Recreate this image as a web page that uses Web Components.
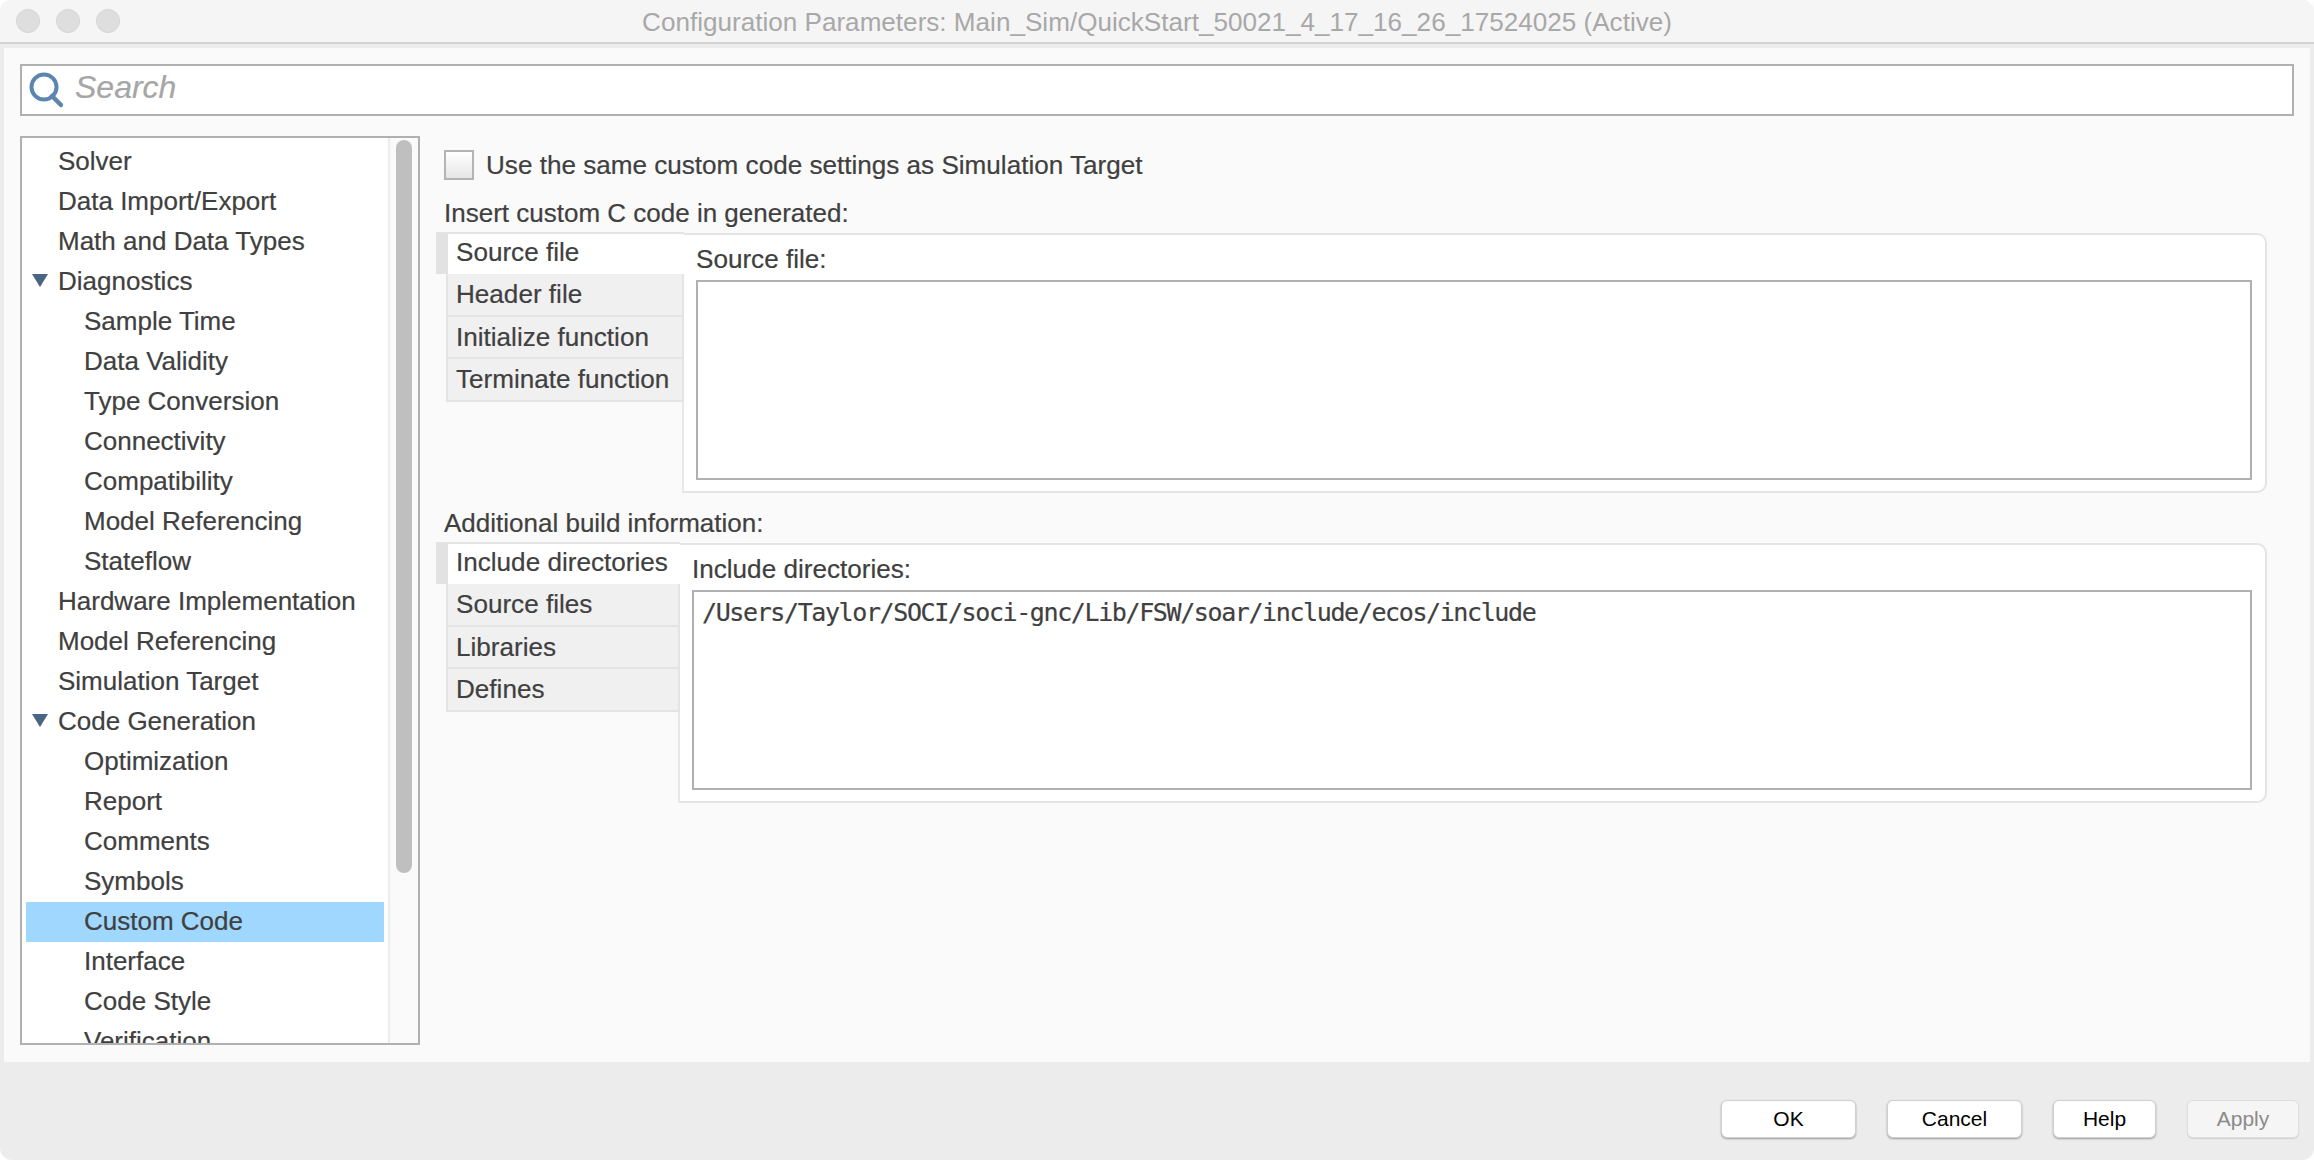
<!DOCTYPE html>
<html>
<head>
<meta charset="utf-8">
<title>Configuration Parameters</title>
<style>
  html, body { margin: 0; padding: 0; background: #fff; }
  body {
    font-family: "Liberation Sans", Arial, sans-serif;
    color: #404040;
    -webkit-text-stroke: 0.2px;
  }
</style>
</head>
<body>
<config-window>
  <title-bar slot="title">Configuration Parameters: Main_Sim/QuickStart_50021_4_17_16_26_17524025 (Active)</title-bar>
  <search-box slot="search"></search-box>
  <tree-view slot="tree">
    <tree-item>Solver</tree-item>
    <tree-item>Data Import/Export</tree-item>
    <tree-item>Math and Data Types</tree-item>
    <tree-item open>Diagnostics</tree-item>
    <tree-item level="1">Sample Time</tree-item>
    <tree-item level="1">Data Validity</tree-item>
    <tree-item level="1">Type Conversion</tree-item>
    <tree-item level="1">Connectivity</tree-item>
    <tree-item level="1">Compatibility</tree-item>
    <tree-item level="1">Model Referencing</tree-item>
    <tree-item level="1">Stateflow</tree-item>
    <tree-item>Hardware Implementation</tree-item>
    <tree-item>Model Referencing</tree-item>
    <tree-item>Simulation Target</tree-item>
    <tree-item open>Code Generation</tree-item>
    <tree-item level="1">Optimization</tree-item>
    <tree-item level="1">Report</tree-item>
    <tree-item level="1">Comments</tree-item>
    <tree-item level="1">Symbols</tree-item>
    <tree-item level="1" selected>Custom Code</tree-item>
    <tree-item level="1">Interface</tree-item>
    <tree-item level="1">Code Style</tree-item>
    <tree-item level="1">Verification</tree-item>
  </tree-view>
  <custom-code slot="content"></custom-code>
  <config-button slot="buttons" style="width:135px">OK</config-button>
  <config-button slot="buttons" style="width:135px">Cancel</config-button>
  <config-button slot="buttons" style="width:103px">Help</config-button>
  <config-button slot="buttons" style="width:112px" disabled>Apply</config-button>
</config-window>

<script>
class ConfigWindow extends HTMLElement {
  constructor() {
    super();
    this.attachShadow({ mode: "open" }).innerHTML = `
      <style>
        :host {
          display: flex;
          flex-direction: column;
          width: 2314px;
          height: 1160px;
          background: #ececec;
          border-radius: 12px;
          overflow: hidden;
        }
        .panel {
          display: flex;
          flex-direction: column;
          height: 1014px;
          box-sizing: border-box;
          margin: 4px 4px 0;
          padding: 16px 16px 17px;
          background: #fafafa;
        }
        .body {
          display: flex;
          gap: 16px;
          margin-top: 20px;
        }
        .buttons {
          display: flex;
          justify-content: flex-end;
          gap: 31px;
          padding: 38px 15px 0 0;
        }
      </style>
      <slot name="title"></slot>
      <div class="panel">
        <slot name="search"></slot>
        <div class="body">
          <slot name="tree"></slot>
          <slot name="content"></slot>
        </div>
      </div>
      <div class="buttons"><slot name="buttons"></slot></div>
    `;
  }
}

class TitleBar extends HTMLElement {
  constructor() {
    super();
    this.attachShadow({ mode: "open" }).innerHTML = `
      <style>
        :host {
          display: flex;
          align-items: center;
          position: relative;
          height: 42px;
          flex: none;
          background: #f5f5f5;
          border-bottom: 2px solid #d2d2d2;
        }
        .lights {
          display: flex;
          gap: 16px;
          padding-left: 16px;
        }
        .lights i {
          width: 22px;
          height: 22px;
          border: 1px solid #d4d4d4;
          border-radius: 50%;
          background: #dedede;
        }
        .text {
          position: absolute;
          left: 0;
          right: 0;
          top: 7px;
          text-align: center;
          font-size: 26.1px;
          color: #a8a8a8;
          -webkit-text-stroke: 0;
        }
      </style>
      <div class="lights"><i></i><i></i><i></i></div>
      <div class="text"><slot></slot></div>
    `;
  }
}

class SearchBox extends HTMLElement {
  constructor() {
    super();
    this.attachShadow({ mode: "open" }).innerHTML = `
      <style>
        :host {
          display: flex;
          align-items: center;
          gap: 12px;
          height: 52px;
          box-sizing: border-box;
          padding-left: 7px;
          background: #fff;
          border: 2px solid #b0b0b0;
        }
        svg { display: block; margin-left: -1px; }
        span {
          font-style: italic;
          font-size: 32px;
          color: #a6a6a6;
          margin-top: -6px;
        }
      </style>
      <svg width="35" height="36" viewBox="0 0 35 36">
        <circle cx="16" cy="15" r="12.5" fill="none" stroke="#5c86b0" stroke-width="4"/>
        <path d="M24 24 L33 33" stroke="#5c86b0" stroke-width="4.5" stroke-linecap="round"/>
      </svg>
      <span>Search</span>
    `;
  }
}

class TreeView extends HTMLElement {
  constructor() {
    super();
    this.attachShadow({ mode: "open" }).innerHTML = `
      <style>
        :host {
          display: flex;
          width: 400px;
          height: 909px;
          flex: none;
          box-sizing: border-box;
          background: #fafafa;
          border: 2px solid #b0b0b0;
          overflow: hidden;
        }
        .rows {
          width: 366px;
          flex: none;
          box-sizing: border-box;
          padding: 4px 4px 0;
          background: #fff;
          overflow: hidden;
        }
        .track {
          flex: 1;
          padding: 2px 6px 0 6px;
          border-left: 2px solid #ececec;
        }
        .thumb {
          height: 733px;
          background: #bfbfbf;
          border-radius: 8px;
        }
      </style>
      <div class="rows"><slot></slot></div>
      <div class="track"><div class="thumb"></div></div>
    `;
  }
}

class TreeItem extends HTMLElement {
  constructor() {
    super();
    this.attachShadow({ mode: "open" }).innerHTML = `
      <style>
        :host {
          display: flex;
          align-items: center;
          height: 40px;
          padding-left: 32px;
          position: relative;
          font-size: 26px;
          color: #404040;
          white-space: nowrap;
        }
        :host([level="1"]) { padding-left: 58px; }
        :host([selected]) { background: #9fd7fe; }
        svg {
          display: none;
          position: absolute;
          left: 6px;
          top: 12px;
        }
        :host([open]) svg { display: block; }
        .label { margin-top: -2px; }
      </style>
      <svg width="16" height="13" viewBox="0 0 16 13"><path d="M0 0H16L8 13Z" fill="#4a6484"/></svg>
      <span class="label"><slot></slot></span>
    `;
  }
}

class TabGroup extends HTMLElement {
  constructor() {
    super();
    this.attachShadow({ mode: "open" }).innerHTML = `
      <style>
        :host {
          display: flex;
          align-items: stretch;
        }
        .tabs {
          flex: none;
          width: var(--tab-width);
          position: relative;
          z-index: 1;
        }
        .page {
          flex: 1;
          margin-left: -2px;
          margin-top: 1px;
          box-sizing: border-box;
          background: #fff;
          border: 2px solid #e4e4e4;
          border-left-color: #e8e8e8;
          border-radius: 0 10px 10px 0;
          padding: 9px 13px 11px 12px;
        }
        .label {
          height: 30px;
          line-height: 30px;
          font-size: 26.1px;
          color: #404040;
        }
        .box {
          box-sizing: border-box;
          height: 200px;
          margin-top: 6px;
          background: #fff;
          border: 2px solid #b0b0b0;
          padding: 8px 8px;
          font-family: "DejaVu Sans Mono", monospace;
          font-size: 25px;
          letter-spacing: -1.39px;
          line-height: 26px;
          color: #404040;
          white-space: nowrap;
        }
      </style>
      <div class="tabs"><slot name="tab"></slot></div>
      <div class="page">
        <div class="label"></div>
        <div class="box"></div>
      </div>
    `;
  }

  connectedCallback() {
    this.shadowRoot.querySelector(".label").textContent = this.getAttribute("label");
    this.shadowRoot.querySelector(".box").textContent = this.getAttribute("value") || "";
  }
}

class TabItem extends HTMLElement {
  constructor() {
    super();
    this.attachShadow({ mode: "open" }).innerHTML = `
      <style>
        :host {
          display: flex;
          align-items: center;
          box-sizing: border-box;
          height: 42.5px;
          margin-left: 10px;
          padding: 1px 0 0 8px;
          background: #f0f0f0;
          border: 2px solid #e4e4e4;
          border-top: 0;
          font-size: 26.1px;
          color: #404040;
          white-space: nowrap;
        }
        :host([selected]) {
          height: 42px;
          margin-left: 0;
          padding: 0 0 0 8px;
          background: #fff;
          border: 0;
          border-left: 12px solid #e2e2e2;
          border-top: 2px solid #e4e4e4;
        }
        :host([selected]) span { margin-top: -3px; }
      </style>
      <span><slot></slot></span>
    `;
  }
}

class CustomCode extends HTMLElement {
  constructor() {
    super();
    this.attachShadow({ mode: "open" }).innerHTML = `
      <style>
        :host {
          display: block;
          flex: 1;
          box-sizing: border-box;
          padding: 14px 27px 0 0;
          font-size: 26.1px;
          color: #404040;
        }
        .check {
          display: flex;
          align-items: center;
          gap: 12px;
          height: 30px;
          padding-left: 8px;
        }
        .box {
          width: 30px;
          height: 30px;
          box-sizing: border-box;
          border: 2px solid #b4b4b4;
          background: linear-gradient(#fff, #e6e6e6);
        }
        h2 {
          margin: 0;
          height: 30px;
          line-height: 30px;
          font: inherit;
          font-size: 26px;
          padding-left: 8px;
        }
        .first { margin: 18px 0 4px; }
        .second { margin: 15px 0 4px; }
        .narrow { --tab-width: 244px; }
        .wide { --tab-width: 248px; }
      </style>
      <div class="check"><div class="box"></div><span>Use the same custom code settings as Simulation Target</span></div>
      <h2 class="first">Insert custom C code in generated:</h2>
      <tab-group class="wide" label="Source file:">
        <tab-item slot="tab" selected>Source file</tab-item>
        <tab-item slot="tab">Header file</tab-item>
        <tab-item slot="tab">Initialize function</tab-item>
        <tab-item slot="tab">Terminate function</tab-item>
      </tab-group>
      <h2 class="second">Additional build information:</h2>
      <tab-group class="narrow" label="Include directories:" value="/Users/Taylor/SOCI/soci-gnc/Lib/FSW/soar/include/ecos/include">
        <tab-item slot="tab" selected>Include directories</tab-item>
        <tab-item slot="tab">Source files</tab-item>
        <tab-item slot="tab">Libraries</tab-item>
        <tab-item slot="tab">Defines</tab-item>
      </tab-group>
    `;
  }
}

class ConfigButton extends HTMLElement {
  constructor() {
    super();
    this.attachShadow({ mode: "open" }).innerHTML = `
      <style>
        :host {
          display: flex;
          align-items: center;
          justify-content: center;
          height: 38px;
          box-sizing: border-box;
          background: #fff;
          border: 1px solid #d0d0d0;
          border-radius: 6px;
          box-shadow: 0 1px 2px rgba(0, 0, 0, 0.35);
          font-size: 21px;
          color: #000;
          -webkit-text-stroke: 0;
        }
        :host([disabled]) {
          background: #f5f5f5;
          color: #8a8a8a;
          box-shadow: 0 1px 1px rgba(0, 0, 0, 0.12);
          border-color: #dedede;
        }
      </style>
      <slot></slot>
    `;
  }
}

customElements.define("config-window", ConfigWindow);
customElements.define("title-bar", TitleBar);
customElements.define("search-box", SearchBox);
customElements.define("tree-view", TreeView);
customElements.define("tree-item", TreeItem);
customElements.define("tab-group", TabGroup);
customElements.define("tab-item", TabItem);
customElements.define("custom-code", CustomCode);
customElements.define("config-button", ConfigButton);
</script>
</body>
</html>
